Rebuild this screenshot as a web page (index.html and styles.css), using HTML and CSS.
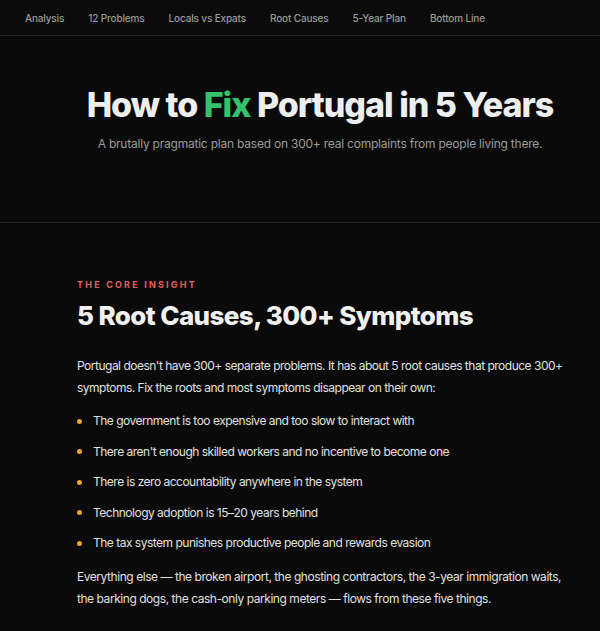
FILE: index.html
```html
<!DOCTYPE html>
<html>
<head>
<meta charset="utf-8">
<link rel="stylesheet" href="styles.css">
</head>
<body>
<nav class="nav">
  <a>Analysis</a>
  <a>12 Problems</a>
  <a>Locals vs Expats</a>
  <a>Root Causes</a>
  <a>5-Year Plan</a>
  <a>Bottom Line</a>
</nav>
<header class="hero">
  <h1>How to <span class="green">Fix</span> Portugal in 5 Years</h1>
  <p>A brutally pragmatic plan based on 300+ real complaints from people living there.</p>
</header>
<section class="section">
  <div class="eyebrow">THE CORE INSIGHT</div>
  <h2>5 Root Causes, 300+ Symptoms</h2>
  <p class="body">Portugal doesn't have 300+ separate problems. It has about 5 root causes that produce 300+ symptoms. Fix the roots and most symptoms disappear on their own:</p>
  <ul class="list">
    <li>The government is too expensive and too slow to interact with</li>
    <li>There aren't enough skilled workers and no incentive to become one</li>
    <li>There is zero accountability anywhere in the system</li>
    <li>Technology adoption is 15–20 years behind</li>
    <li>The tax system punishes productive people and rewards evasion</li>
  </ul>
  <p class="body last">Everything else — the broken airport, the ghosting contractors, the 3-year immigration waits, the barking dogs, the cash-only parking meters — flows from these five things.</p>
</section>
</body>
</html>
```

FILE: styles.css
```css
* { box-sizing: border-box; }
html, body { margin: 0; padding: 0; }
body {
  background: #0a0a0a;
  color: #e8e8e8;
  font-family: Inter, "Liberation Sans", sans-serif;
  overflow: hidden;
}
.nav {
  display: flex;
  gap: 24px;
  height: 36px;
  align-items: center;
  padding: 0 25px 0;
  border-bottom: 1px solid #222;
  background: #0b0b0b;
}
.nav a {
  font-size: 10px;
  letter-spacing: -0.15px;
  color: #9a9a9a;
  font-weight: 500;
}
.hero {
  padding: 49px 0 71px 40px;
  text-align: center;
  border-bottom: 1px solid #262626;
}
.hero h1 {
  margin: 0;
  font-size: 34px;
  font-weight: 800;
  letter-spacing: -1px;
  color: #eeeeee;
  line-height: 40px;
}
.green { color: #34c26a; }
.hero p {
  margin: 11px 0 0;
  font-size: 12px;
  letter-spacing: -0.22px;
  color: #9a9a9a;
}
.section {
  padding: 56px 20px 0 77px;
}
.eyebrow {
  font-size: 9px;
  font-weight: 700;
  letter-spacing: 2.2px;
  color: #e0605c;
}
.section h2 {
  margin: 9px 0 0;
  font-size: 26px;
  font-weight: 800;
  letter-spacing: -0.6px;
  color: #f0f0f0;
  line-height: 34px;
}
.body {
  margin: 22px 0 0;
  font-size: 12px;
  letter-spacing: -0.5px;
  line-height: 22px;
  color: #e0e0e0;
}
.list {
  list-style: none;
  margin: 11px 0 0;
  padding: 0;
  display: flex;
  flex-direction: column;
  gap: 8.5px;
}
.list li {
  display: flex;
  align-items: center;
  gap: 11px;
  font-size: 12px;
  letter-spacing: -0.5px;
  line-height: 22px;
  color: #e0e0e0;
}
.list li::before {
  content: "";
  width: 5px;
  height: 5px;
  border-radius: 50%;
  background: #f5a524;
  flex: none;
}
.body.last { margin-top: 12px; letter-spacing: -0.45px; }
```
